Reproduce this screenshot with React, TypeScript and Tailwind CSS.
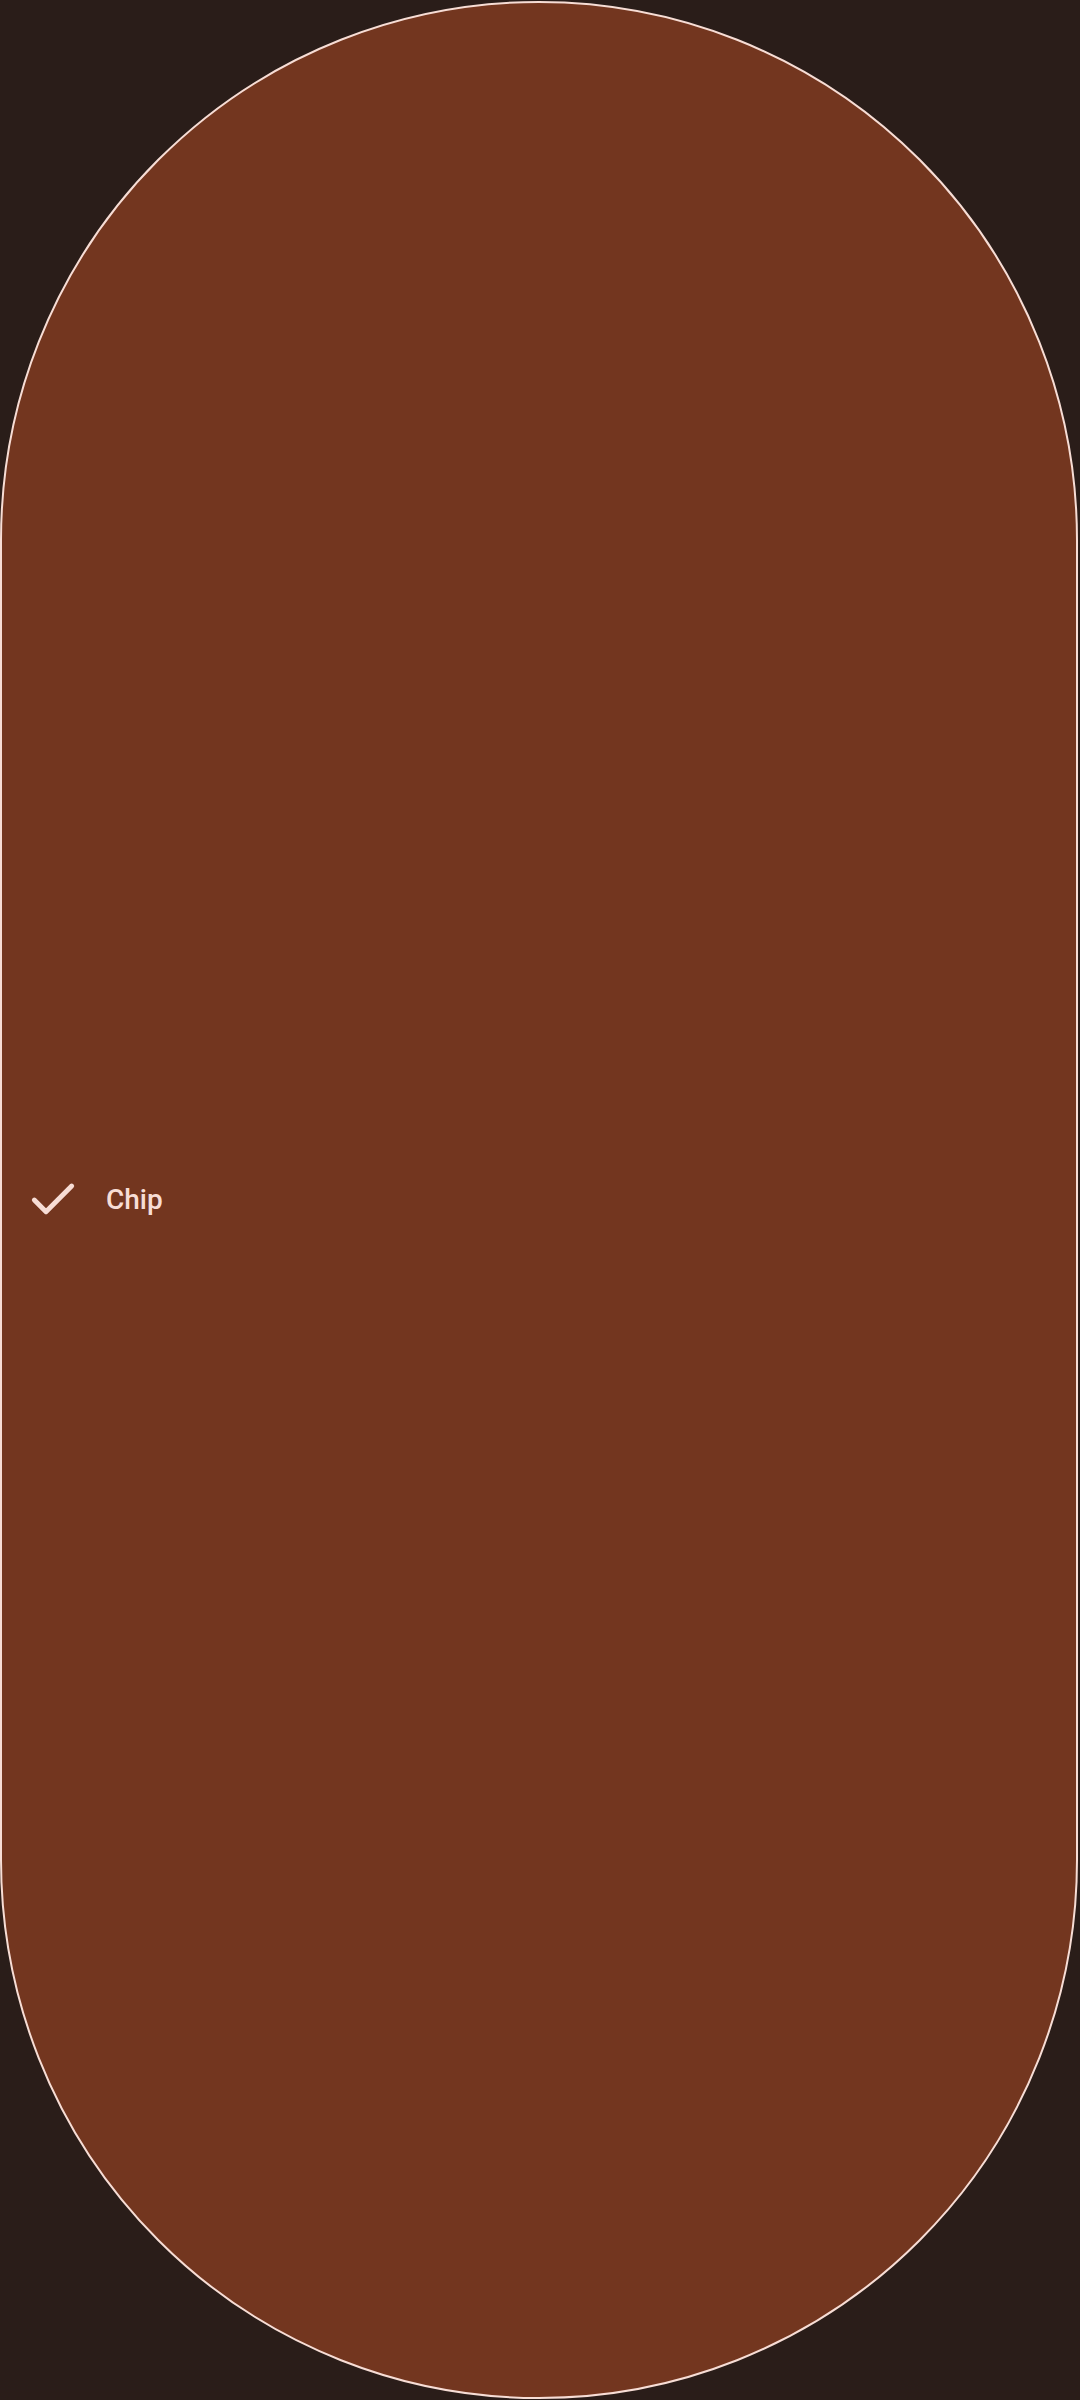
import React from "react";

export default function App() {
  return (
    <div className="w-[1080px] h-[2400px] bg-[#2a1d19] overflow-hidden" style={{ fontFamily: "Roboto, 'Liberation Sans', sans-serif" }}>
      <div className="w-[1078px] h-[2398px] mt-[1px] ml-0 rounded-full border-2 border-[#f7ddd5] bg-[#73361f] flex items-center pl-[23px] gap-[25px]">
        <svg width="56" height="56" viewBox="0 0 24 24" fill="none" stroke="#f7ddd5" strokeWidth="2.1" strokeLinecap="round" strokeLinejoin="round">
          <path d="M20 6 9 17l-5-5" />
        </svg>
        <span className="text-[28px] font-medium text-[#f7ddd5] leading-none">Chip</span>
      </div>
    </div>
  );
}
